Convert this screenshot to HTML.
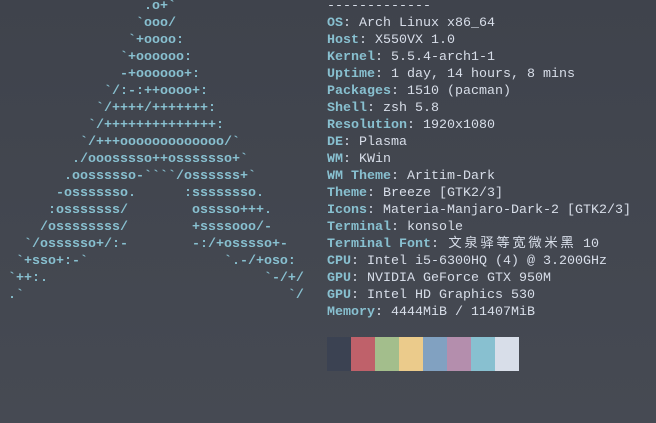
<!DOCTYPE html>
<html><head><meta charset="utf-8"><style>
html,body{margin:0;padding:0}
body{width:656px;height:423px;overflow:hidden;background:linear-gradient(#3f434c,#464a53);font-family:"Liberation Mono","Noto Sans CJK SC",monospace;font-size:13.33px;color:#d8dee9;position:relative}
pre{margin:0;font:inherit;line-height:17px;position:absolute;white-space:pre}
#logo{left:0px;top:-2px;color:#88c0d0;font-weight:bold}
#info{left:327px;top:-2px}
b{color:#88c0d0}
.c{display:inline-block;width:16px;text-align:center}
#pal{position:absolute;left:327px;top:337px;height:34px;display:flex}
#pal div{width:24px;height:34px}
</style></head><body>
<pre id="logo">                  .o+&#96;
                 &#96;ooo/
                &#96;+oooo:
               &#96;+oooooo:
               -+oooooo+:
             &#96;/:-:++oooo+:
            &#96;/++++/+++++++:
           &#96;/++++++++++++++:
          &#96;/+++ooooooooooooo/&#96;
         ./ooosssso++osssssso+&#96;
        .oossssso-&#96;&#96;&#96;&#96;/ossssss+&#96;
       -osssssso.      :ssssssso.
      :osssssss/        osssso+++.
     /ossssssss/        +ssssooo/-
   &#96;/ossssso+/:-        -:/+osssso+-
  &#96;+sso+:-&#96;                 &#96;.-/+oso:
 &#96;++:.                           &#96;-/+/
 .&#96;                                 &#96;/</pre>
<pre id="info">-------------
<b>OS</b>: Arch Linux x86_64
<b>Host</b>: X550VX 1.0
<b>Kernel</b>: 5.5.4-arch1-1
<b>Uptime</b>: 1 day, 14 hours, 8 mins
<b>Packages</b>: 1510 (pacman)
<b>Shell</b>: zsh 5.8
<b>Resolution</b>: 1920x1080
<b>DE</b>: Plasma
<b>WM</b>: KWin
<b>WM Theme</b>: Aritim-Dark
<b>Theme</b>: Breeze [GTK2/3]
<b>Icons</b>: Materia-Manjaro-Dark-2 [GTK2/3]
<b>Terminal</b>: konsole
<b>Terminal Font</b>: <span class="c">文</span><span class="c">泉</span><span class="c">驿</span><span class="c">等</span><span class="c">宽</span><span class="c">微</span><span class="c">米</span><span class="c">黑</span> 10
<b>CPU</b>: Intel i5-6300HQ (4) @ 3.200GHz
<b>GPU</b>: NVIDIA GeForce GTX 950M
<b>GPU</b>: Intel HD Graphics 530
<b>Memory</b>: 4444MiB / 11407MiB</pre>
<div id="pal"><div style="background:#3b4252"></div><div style="background:#bf616a"></div><div style="background:#a3be8c"></div><div style="background:#ebcb8b"></div><div style="background:#81a1c1"></div><div style="background:#b48ead"></div><div style="background:#88c0d0"></div><div style="background:#d8dee9"></div></div>
</body></html>
